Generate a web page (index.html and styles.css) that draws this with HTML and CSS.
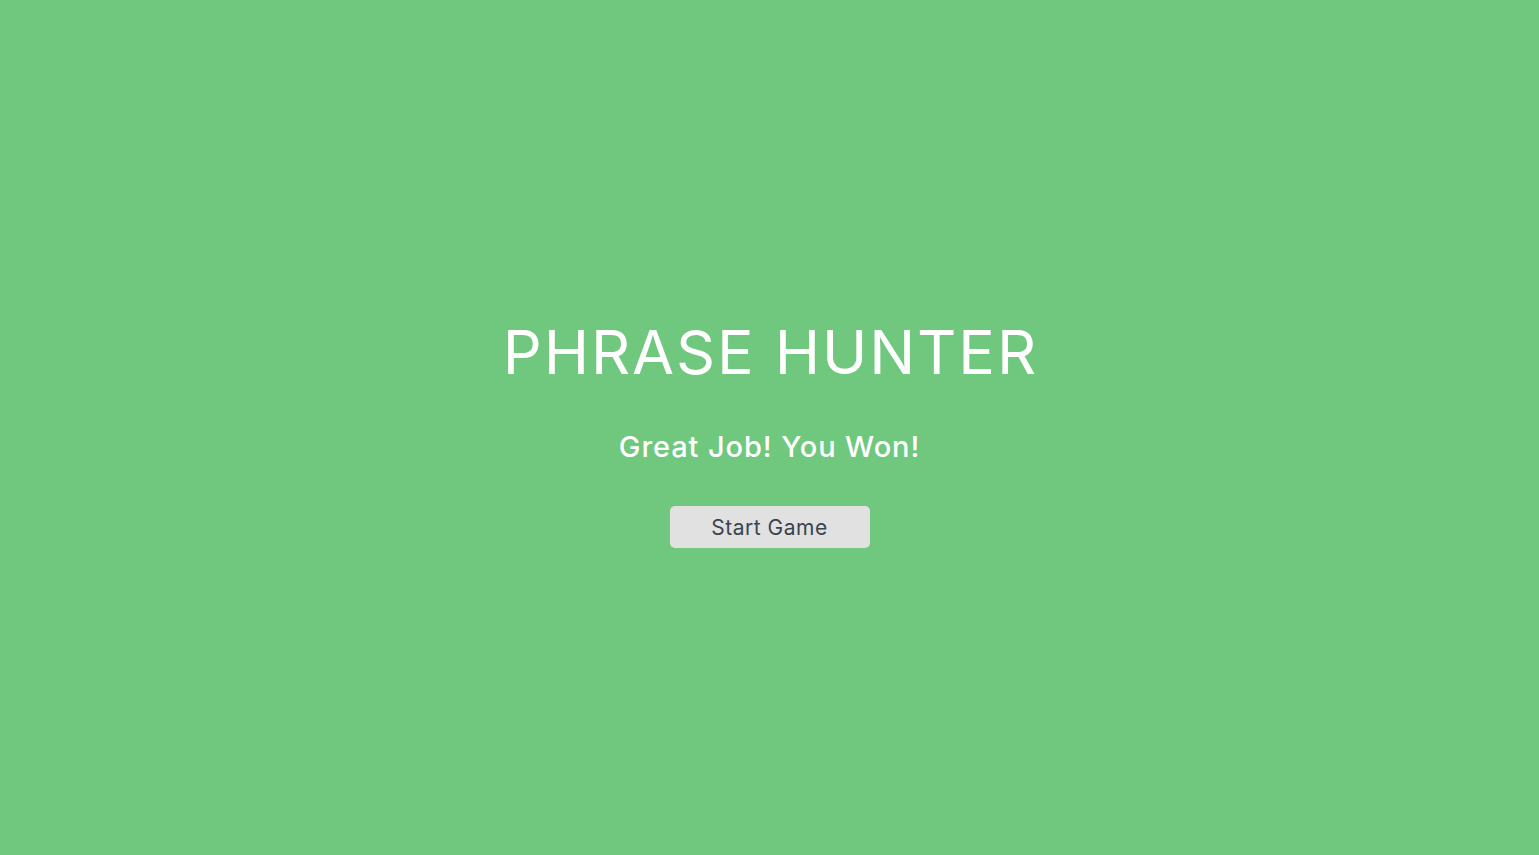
FILE: index.html
```html
<!DOCTYPE html>
<html lang="en">
<head>
<meta charset="utf-8">
<title>Phrase Hunter</title>
<link rel="stylesheet" href="styles.css">
</head>
<body>
<main class="overlay">
  <h2 class="title">PHRASE HUNTER</h2>
  <h1 class="message">Great Job! You Won!</h1>
  <button class="btn-reset">Start Game</button>
</main>
</body>
</html>
```
FILE: styles.css
```css
* { box-sizing: border-box; }
html, body { margin: 0; padding: 0; height: 100%; }
body {
  background: #6fc87e;
  font-family: Inter, "Open Sans", sans-serif;
  color: #fff;
}
.overlay {
  height: 100vh;
  display: flex;
  flex-direction: column;
  align-items: center;
  padding-top: 320px;
}
.title {
  margin: 0;
  font-size: 61px;
  font-weight: 400;
  line-height: 64px;
  letter-spacing: 1.9px;
  padding-left: 1.9px;
}
.message {
  margin: 47px 0 0;
  font-size: 29px;
  font-weight: 500;
  line-height: 32px;
  letter-spacing: 0.9px;
}
.btn-reset {
  margin-top: 43px;
  width: 200px;
  height: 42px;
  border: none;
  border-radius: 5px;
  background: #e1e1e1;
  color: #3a4450;
  font-family: Inter, "Open Sans", sans-serif;
  font-size: 21px;
  font-weight: 400;
  letter-spacing: 0.5px;
  padding: 0;
}
```
